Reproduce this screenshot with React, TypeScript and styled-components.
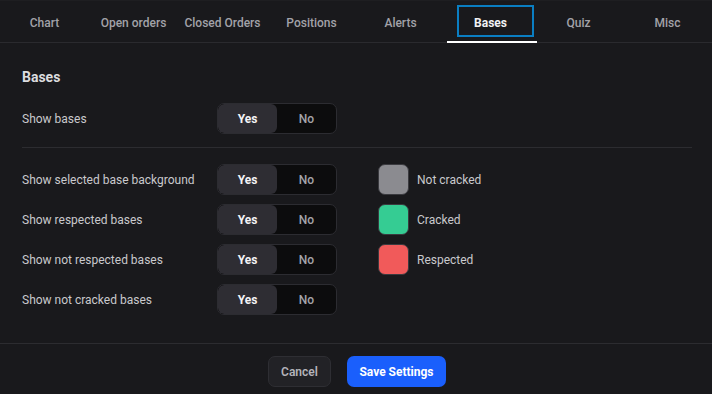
import React from 'react'
import styled, { createGlobalStyle } from 'styled-components'

const GlobalStyle = createGlobalStyle`
  html, body {
    margin: 0;
    padding: 0;
    background: #19191c;
  }
  * {
    box-sizing: border-box;
  }
`

const tabs = ['Chart', 'Open orders', 'Closed Orders', 'Positions', 'Alerts', 'Bases', 'Quiz', 'Misc']

type RowType = {
    label: string
    swatch?: { color: string; text: string }
}

const rows: RowType[] = [
    { label: 'Show selected base background', swatch: { color: '#8b8b90', text: 'Not cracked' } },
    { label: 'Show respected bases', swatch: { color: '#35cc93', text: 'Cracked' } },
    { label: 'Show not respected bases', swatch: { color: '#f15a5a', text: 'Respected' } },
    { label: 'Show not cracked bases' },
]

function Toggle() {
    return (
        <ToggleStyle>
            <ToggleOption active>Yes</ToggleOption>
            <ToggleOption>No</ToggleOption>
        </ToggleStyle>
    )
}

function App() {
    return (
        <Page>
            <GlobalStyle/>
            <TabBar>
                {tabs.map(t => (
                    <Tab key={t} active={t === 'Bases'}>
                        <TabLabel active={t === 'Bases'}>{t}</TabLabel>
                    </Tab>
                ))}
            </TabBar>
            <Content>
                <Heading>Bases</Heading>
                <Row>
                    <Label>Show bases</Label>
                    <Toggle/>
                </Row>
                <Divider/>
                <Rows>
                    {rows.map(r => (
                        <Row key={r.label}>
                            <Label>{r.label}</Label>
                            <Toggle/>
                            {r.swatch && (
                                <Legend>
                                    <Swatch color={r.swatch.color}/>
                                    <LegendText>{r.swatch.text}</LegendText>
                                </Legend>
                            )}
                        </Row>
                    ))}
                </Rows>
            </Content>
            <Footer>
                <CancelButton>Cancel</CancelButton>
                <SaveButton>Save Settings</SaveButton>
            </Footer>
        </Page>
    )
}

export default App

const Page = styled.div`
  width: 712px;
  height: 394px;
  display: flex;
  flex-direction: column;
  background: #19191c;
  font-family: Roboto, "Liberation Sans", sans-serif;
  border-top: 1px solid #1e1e21;
`
const TabBar = styled.div`
  display: grid;
  grid-template-columns: repeat(8, 1fr);
  height: 42px;
  border-bottom: 1px solid #2a2a2e;
`
const Tab = styled.div<{ active?: boolean }>`
  position: relative;
  display: flex;
  align-items: center;
  justify-content: center;
  padding-top: 2px;
  &::after {
    content: '';
    display: ${p => p.active ? 'block' : 'none'};
    position: absolute;
    left: 2px;
    right: -3px;
    bottom: -1px;
    height: 2px;
    background: #ffffff;
  }
`
const TabLabel = styled.div<{ active?: boolean }>`
  font-size: 12px;
  font-weight: ${p => p.active ? 700 : 500};
  color: ${p => p.active ? '#f2f2f4' : '#a2a2a8'};
  width: ${p => p.active ? '77px' : 'auto'};
  height: 32px;
  display: flex;
  align-items: center;
  justify-content: center;
  border: ${p => p.active ? '2px solid #0a7ec2' : 'none'};
  margin-top: -4px;
  margin-left: ${p => p.active ? '11px' : '0'};
  padding-top: 4px;
  padding-right: ${p => p.active ? '9px' : '0'};
`
const Content = styled.div`
  flex: 1;
  padding: 26px 20px 0 22px;
`
const Heading = styled.div`
  font-size: 14px;
  font-weight: 700;
  color: #dcdcdf;
  line-height: 17px;
  margin-bottom: 17px;
`
const Rows = styled.div`
  display: flex;
  flex-direction: column;
  gap: 9px;
`
const Row = styled.div`
  display: flex;
  align-items: center;
  height: 31px;
`
const Label = styled.div`
  width: 195px;
  font-size: 12px;
  color: #c9c9cd;
`
const ToggleStyle = styled.div`
  display: flex;
  width: 120px;
  height: 31px;
  border: 1px solid #2c2c31;
  border-radius: 7px;
  background: #0c0c0d;
  overflow: hidden;
`
const ToggleOption = styled.div<{ active?: boolean }>`
  flex: 1;
  display: flex;
  align-items: center;
  justify-content: center;
  font-size: 12px;
  font-weight: ${p => p.active ? 700 : 500};
  color: ${p => p.active ? '#f4f4f6' : '#a4a4aa'};
  background: ${p => p.active ? '#2e2d33' : 'transparent'};
  border-radius: 6px;
`
const Divider = styled.div`
  height: 1px;
  background: #2c2c30;
  margin: 13px 0 16px;
`
const Legend = styled.div`
  display: flex;
  align-items: center;
  margin-left: 41px;
  gap: 8px;
`
const Swatch = styled.div<{ color: string }>`
  width: 31px;
  height: 31px;
  border-radius: 7px;
  background: ${p => p.color};
  border: 1px solid #3a3a3f;
`
const LegendText = styled.div`
  font-size: 12px;
  color: #c9c9cd;
`
const Footer = styled.div`
  height: 51px;
  border-top: 1px solid #2c2c30;
  display: flex;
  align-items: flex-start;
  justify-content: center;
  gap: 16px;
  padding: 12px 0 0 2px;
`
const CancelButton = styled.button`
  height: 31px;
  width: 63px;
  border-radius: 7px;
  border: 1px solid #2e2e33;
  background: #222226;
  color: #b4b4ba;
  font-family: Roboto, "Liberation Sans", sans-serif;
  font-size: 12px;
  font-weight: 600;
  padding: 0;
`
const SaveButton = styled.button`
  height: 31px;
  width: 99px;
  border-radius: 7px;
  border: none;
  background: #1a5ffc;
  color: #ffffff;
  font-family: Roboto, "Liberation Sans", sans-serif;
  font-size: 12px;
  font-weight: 700;
  padding: 0;
`
